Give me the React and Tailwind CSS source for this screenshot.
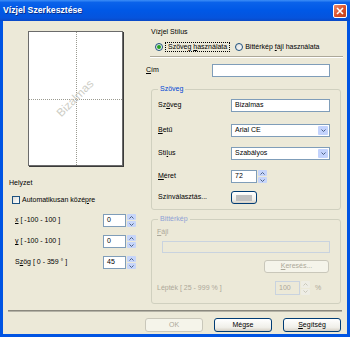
import React from "react";

/* small glyph used in spinners and combo boxes */
const Chevron = ({ up, color = "#4d6185" }) => (
  <svg width="5" height="3" viewBox="0 0 5 3" className="block">
    <path
      d={up ? "M0.5 2.5 L2.5 0.5 L4.5 2.5" : "M0.5 0.5 L2.5 2.5 L4.5 0.5"}
      fill="none"
      stroke={color}
      strokeWidth="1"
    />
  </svg>
);

const Spin = ({ disabled }) => (
  <div className="ml-[1px] flex h-full w-[9px] flex-col gap-[1px]">
    <div
      className={`flex flex-1 items-center justify-center rounded-[1px] ${
        disabled ? "bg-[#eeede5]" : "bg-[#c6d5fa]"
      }`}
    >
      <Chevron up color={disabled ? "#c9c7ba" : "#4d6185"} />
    </div>
    <div
      className={`flex flex-1 items-center justify-center rounded-[1px] ${
        disabled ? "bg-[#eeede5]" : "bg-[#c6d5fa]"
      }`}
    >
      <Chevron color={disabled ? "#c9c7ba" : "#4d6185"} />
    </div>
  </div>
);

const TextBox = ({ value, className = "" }) => (
  <div
    className={`flex items-center border border-[#7f9db9] bg-white pl-[3px] text-black ${className}`}
  >
    {value}
  </div>
);

const Combo = ({ value }) => (
  <div className="flex h-[13px] w-[99px] items-center border border-[#7f9db9] bg-white pl-[3px]">
    <span className="flex-1">{value}</span>
    <div className="mr-[1px] flex h-[9px] w-[10px] items-center justify-center rounded-[1px] bg-[#c3d3fd]">
      <Chevron />
    </div>
  </div>
);

const Radio = ({ checked }) => (
  <span className="flex h-[8px] w-[8px] shrink-0 items-center justify-center rounded-full border border-[#1c5180] bg-[linear-gradient(135deg,#dcdcd7,#ffffff)]">
    {checked && <span className="h-[4px] w-[4px] rounded-full bg-[#21a121]" />}
  </span>
);

const Button = ({ children, disabled, className = "" }) => (
  <div
    className={`flex items-center justify-center rounded-[3px] border ${
      disabled
        ? "border-[#c9c7ba] bg-[#f5f4ea] text-[#aca899]"
        : "border-[#003c74] bg-[linear-gradient(to_bottom,#ffffff,#f0efe9_70%,#d6d0c5)] text-black"
    } ${className}`}
  >
    {children}
  </div>
);

const Group = ({ title, disabled, className = "", children }) => (
  <fieldset
    className={`rounded-[3px] border border-[#d0d0bf] ${className}`}
  >
    <legend
      className={`ml-[6px] px-[2px] leading-[12px] ${
        disabled ? "text-[#8fa2d6]" : "text-[#0046d5]"
      }`}
    >
      {title}
    </legend>
    {children}
  </fieldset>
);

const NumRow = ({ label, value }) => (
  <div className="mt-[8px] flex h-[13px] items-center">
    <span className="ml-[12px] w-[88px]">{label}</span>
    <TextBox value={value} className="h-[13px] w-[23px]" />
    <Spin />
  </div>
);

const App = () => {
  return (
    <div className="flex h-[337px] w-[350px] flex-col bg-[#0054e3] font-['Liberation_Sans',Arial,sans-serif] text-[7px] text-black">
      {/* title bar */}
      <div className="flex h-[21px] items-center bg-[linear-gradient(to_bottom,#3d8ef7_0%,#0a62ea_12%,#0058e6_50%,#0554dd_85%,#0a49c6_100%)] pl-[3px] pr-[3px]">
        <span className="flex-1 text-[8.7px] font-bold text-white [text-shadow:1px_1px_0_#0a2f8a]">
          Vízjel Szerkesztése
        </span>
        <div className="flex h-[14px] w-[14px] items-center justify-center rounded-[2px] border border-white bg-[linear-gradient(135deg,#ef8c6a,#d9502a_55%,#c2401b)]">
          <svg width="8" height="8" viewBox="0 0 8 8" className="block">
            <path d="M1 1 L7 7 M7 1 L1 7" stroke="white" strokeWidth="1.6" />
          </svg>
        </div>
      </div>

      {/* dialog body */}
      <div className="mx-[3px] mb-[3px] flex flex-1 flex-col bg-[#ece9d8]">
        <div className="flex h-[289px]">
          {/* left column */}
          <div className="flex w-[143px] flex-col">
            <div className="relative ml-[25px] mt-[10px] h-[135px] w-[95px] overflow-hidden border border-[#6b6b6b] bg-white shadow-[1px_1px_0_#3a3a3a]">
              <div className="absolute bottom-0 left-[47px] top-0 border-l border-dotted border-[#9a9a90]" />
              <div className="absolute left-0 right-0 top-[67px] border-t border-dotted border-[#9a9a90]" />
              <div className="absolute inset-0 flex items-center justify-center">
                <span className="-rotate-45 text-[11.5px] text-[#cdcdc5]">
                  Bizalmas
                </span>
              </div>
            </div>
            <div className="ml-[6px] mt-[11px] h-[12px] leading-[12px]">
              Helyzet
            </div>
            <div className="ml-[9px] mt-[5px] flex h-[12px] items-center gap-[2px]">
              <span className="h-[8px] w-[8px] border border-[#1c5180] bg-[linear-gradient(135deg,#dcdcd7,#ffffff)]" />
              <span>
                Automatikusan közé<span className="underline">p</span>re
              </span>
            </div>
            <NumRow
              label={
                <>
                  <span className="underline">x</span> [ -100 - 100 ]
                </>
              }
              value="0"
            />
            <NumRow
              label={
                <>
                  <span className="underline">y</span> [ -100 - 100 ]
                </>
              }
              value="0"
            />
            <NumRow
              label={
                <>
                  S<span className="underline">z</span>ög [ 0 - 359 ° ]
                </>
              }
              value="45"
            />
          </div>

          {/* right column */}
          <div className="flex flex-1 flex-col">
            <div className="ml-[5px] mt-[5px] h-[12px] leading-[12px]">
              Vízjel Stílus
            </div>
            <div className="mt-[3px] flex h-[12px] items-center">
              <div className="ml-[9px]">
                <Radio checked />
              </div>
              <span className="ml-[2px] border border-dotted border-black px-[2px] leading-[8px]">
                Szöveg <span className="underline">h</span>asználata
              </span>
              <div className="ml-[5px]">
                <Radio />
              </div>
              <span className="ml-[2px]">
                Bittérkép <span className="underline">f</span>ájl használata
              </span>
            </div>
            <div className="ml-[4px] mt-[3px] h-[2px] w-[193px] border-t border-b border-t-[#aca899] border-b-white" />
            <div className="mt-[6px] flex h-[13px] items-center">
              <span className="w-[66px]">
                <span className="underline">C</span>ím
              </span>
              <TextBox value="" className="h-[13px] w-[118px]" />
            </div>

            <Group title="Szöveg" className="ml-[5px] mt-[6px] w-[190px] pb-[5px]">
              <div className="mt-[4px] flex h-[13px] items-center">
                <span className="ml-[6px] w-[73px]">
                  Sz<span className="underline">ö</span>veg
                </span>
                <TextBox value="Bizalmas" className="h-[13px] w-[99px]" />
              </div>
              <div className="mt-[12px] flex h-[13px] items-center">
                <span className="ml-[6px] w-[73px]">
                  <span className="underline">B</span>etű
                </span>
                <Combo value="Arial CE" />
              </div>
              <div className="mt-[10px] flex h-[13px] items-center">
                <span className="ml-[6px] w-[73px]">
                  Stí<span className="underline">l</span>us
                </span>
                <Combo value="Szabályos" />
              </div>
              <div className="mt-[10px] flex h-[13px] items-center">
                <span className="ml-[6px] w-[73px]">
                  <span className="underline">M</span>éret
                </span>
                <TextBox value="72" className="h-[13px] w-[26px]" />
                <Spin />
              </div>
              <div className="mt-[8px] flex h-[13px] items-center">
                <span className="ml-[6px] w-[73px]">Színválasztás...</span>
                <Button className="h-[13px] w-[26px]">
                  <span className="h-[6px] w-[16px] bg-[#c0c0c0]" />
                </Button>
              </div>
            </Group>

            <Group
              title="Bittérkép"
              disabled
              className="ml-[5px] mt-[3px] w-[190px] pb-[8px] text-[#aca899]"
            >
              <div className="ml-[5px] mt-[1px] h-[12px] leading-[12px]">
                <span className="underline">F</span>ájl
              </div>
              <div className="ml-[10px] mt-[3px] h-[12px] w-[168px] border border-[#c9d3df]" />
              <Button disabled className="ml-[112px] mt-[7px] h-[13px] w-[65px]">
                <span>
                  <span className="underline">K</span>eresés...
                </span>
              </Button>
              <div className="mt-[8px] flex h-[14px] items-center">
                <span className="ml-[5px] w-[118px]">Lépték [ 25 - 999 % ]</span>
                <div className="flex h-[14px] w-[25px] items-center border border-[#c9d3df] pl-[3px]">
                  100
                </div>
                <Spin disabled />
                <span className="ml-[5px]">%</span>
              </div>
            </Group>
          </div>
        </div>

        {/* separator + buttons */}
        <div className="mx-[5px] h-[2px] border-t border-b border-t-[#8a887e] border-b-[#b4b2a6]" />
        <div className="mt-[6px] flex justify-end gap-[11px] pr-[6px]">
          <Button disabled className="h-[14px] w-[58px]">
            OK
          </Button>
          <Button className="h-[14px] w-[58px]">Mégse</Button>
          <Button className="h-[14px] w-[58px]">
            <span>
              <span className="underline">S</span>egítség
            </span>
          </Button>
        </div>
      </div>
    </div>
  );
};

export default App;
